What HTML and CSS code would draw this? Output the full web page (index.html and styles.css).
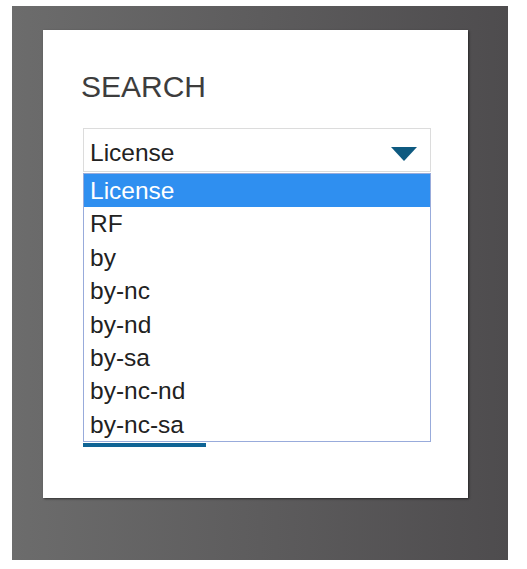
FILE: index.html
```html
<!DOCTYPE html>
<html lang="en">
<head>
    <meta charset="UTF-8">
    <meta name="viewport" content="width=device-width, initial-scale=1.0">
    <title>Search</title>
    <link rel="stylesheet" href="styles.css">
</head>
<body>
    <div class="backdrop">
        <div class="card">
            <h2 class="title">SEARCH</h2>
            <div class="select">
                <div class="select-box">
                    <span>License</span>
                    <svg class="arrow" width="26" height="14" viewBox="0 0 26 14">
                        <polygon points="0,0 26,0 13,14" fill="#0e5a80"/>
                    </svg>
                </div>
                <ul class="options">
                    <li class="selected">License</li>
                    <li>RF</li>
                    <li>by</li>
                    <li>by-nc</li>
                    <li>by-nd</li>
                    <li>by-sa</li>
                    <li>by-nc-nd</li>
                    <li>by-nc-sa</li>
                </ul>
                <div class="underline"></div>
            </div>
        </div>
    </div>
</body>
</html>
```

FILE: styles.css
```css
body {
    margin: 0;
    background-color: #fff;
    font-family: "Liberation Sans", Arial, sans-serif;
}

.backdrop {
    margin: 6px 19px 9px 12px;
    height: 554px;
    box-sizing: border-box;
    padding: 24px 0 0 31px;
    background: linear-gradient(to right, #6c6c6c, #4e4c4e);
}

.card {
    width: 425px;
    height: 468px;
    box-sizing: border-box;
    padding: 40px 37px 0 40px;
    background-color: #fff;
    box-shadow: 1px 1px 2px rgba(0, 0, 0, 0.55);
}

.title {
    margin: 0 0 24px -2px;
    font-size: 30px;
    line-height: 34px;
    font-weight: normal;
    color: #3d3d3d;
}

.select-box {
    height: 44px;
    box-sizing: border-box;
    border: 1px solid #dcdcdc;
    padding: 5px 13px 0 6px;
    display: flex;
    justify-content: space-between;
    font-size: 24.5px;
    line-height: 37px;
    color: #222;
}

.arrow {
    margin-top: 13px;
}

.options {
    list-style: none;
    margin: 1px 0 0 0;
    padding: 0;
    border: 1px solid #98abdb;
    font-size: 24.5px;
    color: #222;
}

.options li {
    height: 33.4px;
    line-height: 33.4px;
    padding-left: 6px;
}

.options .selected {
    background-color: #2f8ff0;
    color: #fff;
}

.underline {
    width: 123px;
    height: 4px;
    margin-top: 1px;
    background-color: #0f6495;
}
```
